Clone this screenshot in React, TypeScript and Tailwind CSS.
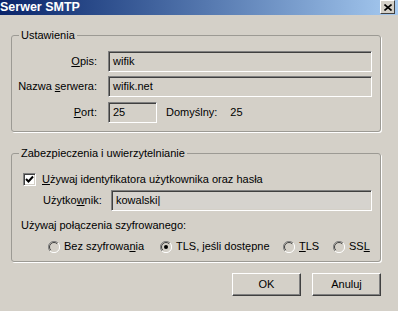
import React from "react";

const sunken =
  "border border-t-[#808080] border-l-[#808080] border-b-white border-r-white shadow-[inset_1px_1px_0_#404040,inset_-1px_-1px_0_#d4d0c8]";

function Field({ value, className = "" }: { value: string; className?: string }) {
  return (
    <div className={`flex h-[21px] items-center bg-[#d4d0c8] pl-[4px] ${sunken} ${className}`}>
      {value}
    </div>
  );
}

function Radio({ checked = false }: { checked?: boolean }) {
  return (
    <svg width="12" height="12" viewBox="0 0 12 12" className="shrink-0">
      <circle cx="6" cy="6" r="5.5" fill="#d4d0c8" />
      <path d="M10 2 A5.5 5.5 0 0 0 2 10" fill="none" stroke="#808080" strokeWidth="1" />
      <path d="M9.2 2.8 A4.5 4.5 0 0 0 2.8 9.2" fill="none" stroke="#404040" strokeWidth="1" />
      <path d="M2 10 A5.5 5.5 0 0 0 10 2" fill="none" stroke="#ffffff" strokeWidth="1" />
      {checked && <circle cx="6" cy="6" r="2" fill="#000" />}
    </svg>
  );
}

function Button({ children }: { children: React.ReactNode }) {
  return (
    <div className="flex h-[23px] w-[69px] items-center justify-center border border-t-white border-l-white border-b-[#404040] border-r-[#404040] bg-[#d4d0c8] shadow-[inset_-1px_-1px_0_#808080]">
      {children}
    </div>
  );
}

export default function App() {
  return (
    <div className="h-[311px] w-[398px] overflow-hidden bg-[#d4d0c8] font-['Liberation_Sans',Arial,sans-serif] text-[11px] leading-[13px] text-black">
      {/* title bar */}
      <div className="flex h-[15px] items-center justify-between bg-gradient-to-r from-[#0a246a] to-[#a6caf0] pr-[3px]">
        <span className="text-[12.5px] font-bold leading-[15px] text-white">Serwer SMTP</span>
        <div className="mt-[-1px] flex h-[14px] w-[15px] items-center justify-center border border-t-white border-l-white border-b-[#404040] border-r-[#404040] bg-[#d4d0c8]">
          <svg width="8" height="7" viewBox="0 0 8 7">
            <path d="M0.5 0.5 L7.5 6.5 M7.5 0.5 L0.5 6.5" stroke="#000" strokeWidth="1.6" />
          </svg>
        </div>
      </div>

      <div className="pl-[11px] pr-[17px]">
        {/* Ustawienia */}
        <fieldset className="mt-[14px] rounded-[3px] border border-[#9c9a94] pb-[8px] shadow-[1px_1px_0_#fff]">
          <legend className="ml-[7px] px-[2px]">Ustawienia</legend>
          <div className="flex flex-col pt-[9px] pr-[8px]">
            <div className="flex items-center">
              <span className="w-[85px] text-right">
                <u>O</u>pis:
              </span>
              <Field value="wifik" className="ml-[11px] flex-1" />
            </div>
            <div className="mt-[4px] flex items-center">
              <span className="w-[85px] text-right">
                Nazwa <u>s</u>erwera:
              </span>
              <Field value="wifik.net" className="ml-[11px] flex-1" />
            </div>
            <div className="mt-[5px] flex items-center">
              <span className="w-[85px] text-right">
                <u>P</u>ort:
              </span>
              <Field value="25" className="ml-[11px] w-[49px]" />
              <span className="ml-[9px]">Domyślny:</span>
              <span className="ml-[13px]">25</span>
            </div>
          </div>
        </fieldset>

        {/* Zabezpieczenia */}
        <fieldset className="mt-[15px] rounded-[3px] border border-[#9c9a94] pb-[8px] shadow-[1px_1px_0_#fff]">
          <legend className="ml-[7px] px-[2px]">Zabezpieczenia i uwierzytelnianie</legend>
          <div className="flex flex-col pr-[8px]">
            <div className="mt-[13px] flex items-center pl-[11px]">
              <div className={`flex h-[13px] w-[13px] items-center justify-center bg-white ${sunken}`}>
                <svg width="9" height="9" viewBox="0 0 9 9">
                  <path d="M1 4 L3.5 6.5 L8 1.5" fill="none" stroke="#000" strokeWidth="2" />
                </svg>
              </div>
              <span className="ml-[6px]">
                <u>U</u>żywaj identyfikatora użytkownika oraz hasła
              </span>
            </div>
            <div className="mt-[4px] flex items-center pl-[31px]">
              <span className="w-[68px]">
                Użytko<u>w</u>nik:
              </span>
              <Field value="kowalski|" className="flex-1 bg-[#d6d3ce]" />
            </div>
            <div className="mt-[8px] pl-[9px]">Używaj połączenia szyfrowanego:</div>
            <div className="mt-[8px] flex items-center pl-[36px]">
              <div className="flex w-[112px] items-center gap-[4px]">
                <Radio />
                <span>
                  Bez szyfrowa<u>n</u>ia
                </span>
              </div>
              <div className="flex w-[123px] items-center gap-[4px]">
                <Radio checked />
                <span>
                  TLS, <u>j</u>eśli dostępne
                </span>
              </div>
              <div className="flex w-[50px] items-center gap-[4px]">
                <Radio />
                <span>
                  <u>T</u>LS
                </span>
              </div>
              <div className="flex items-center gap-[4px]">
                <Radio />
                <span>
                  SS<u>L</u>
                </span>
              </div>
            </div>
          </div>
        </fieldset>

        <div className="mt-[11px] flex justify-end gap-[11px]">
          <Button>OK</Button>
          <Button>Anuluj</Button>
        </div>
      </div>
    </div>
  );
}
